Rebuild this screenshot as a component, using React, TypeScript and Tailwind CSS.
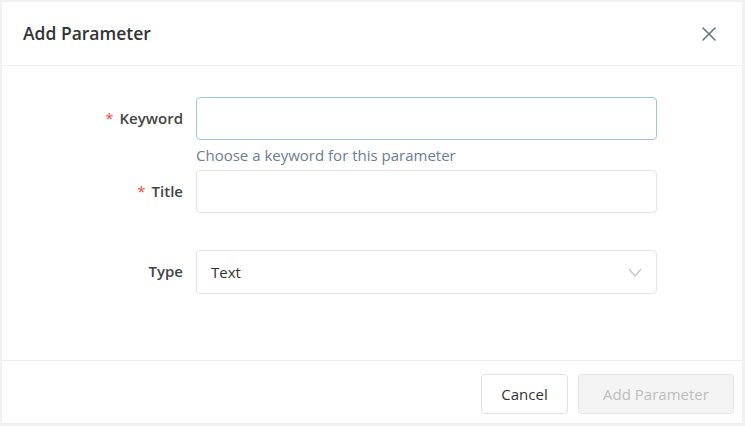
const FIELDS = [
  { label: 'Keyword', required: true, help: 'Choose a keyword for this parameter', focused: true },
  { label: 'Title', required: true },
];

export default function App() {
  return (
    <div className="h-[426px] w-[745px] bg-[#f0f0f0] pb-[3px] pl-[2px] pr-[3px] pt-[2px] font-['Open_Sans',sans-serif] text-[#333]">
      <div className="flex h-full flex-col bg-white">
        <div className="flex h-[64px] items-center justify-between border-b border-[#eeeeee] pl-[21px] pr-[26px]">
          <h1 className="text-[17.5px] font-semibold text-[#333]">Add Parameter</h1>
          <svg width="14" height="14" viewBox="0 0 14 14" className="text-[#667788]">
            <path d="M1 1 L13 13 M13 1 L1 13" stroke="currentColor" strokeWidth="1.6" strokeLinecap="round" />
          </svg>
        </div>

        <div className="flex-1 pt-[31px]">
          {FIELDS.map((f) => (
            <div key={f.label} className="flex">
              <label className="flex h-[42px] w-[194px] items-center justify-end pr-[13px] text-[15px] font-semibold text-[#444]">
                {f.required && <span className="mr-[6px] font-normal text-[#f04848]">*</span>}
                {f.label}
              </label>
              <div className="w-[461px]">
                <div
                  className={
                    f.focused
                      ? 'h-[43px] rounded-[4px] border border-[#9ec2ea]'
                      : 'h-[43px] rounded-[4px] border border-[#e6e6e6]'
                  }
                />
                {f.help ? (
                  <div className="h-[30px] pt-[5px] text-[15px] leading-[20px] text-[#6b7d92]">{f.help}</div>
                ) : null}
              </div>
            </div>
          ))}

          <div className="mt-[37px] flex">
            <label className="flex h-[43px] w-[194px] items-center justify-end pr-[13px] text-[15px] font-semibold text-[#444]">
              Type
            </label>
            <div className="flex h-[44px] w-[461px] items-center justify-between rounded-[4px] border border-[#e6e6e6] pl-[14px] pr-[14px] text-[15px] text-[#333]">
              <span>Text</span>
              <svg width="14" height="9" viewBox="0 0 14 9" className="text-[#c4c4c4]">
                <path d="M1 1 L7 8 L13 1" fill="none" stroke="currentColor" strokeWidth="1.2" />
              </svg>
            </div>
          </div>
        </div>

        <div className="flex h-[63px] items-center justify-end gap-[10px] border-t border-[#eeeeee] pr-[8px] pt-[4px]">
          <button className="h-[40px] w-[87px] rounded-[4px] border border-[#e2e2e2] bg-white text-[15px] text-[#333]">
            Cancel
          </button>
          <button className="h-[40px] w-[156px] rounded-[4px] border border-[#e6e6e6] bg-[#f4f4f4] text-[15px] text-[#bdbdbd]">
            Add Parameter
          </button>
        </div>
      </div>
    </div>
  );
}
